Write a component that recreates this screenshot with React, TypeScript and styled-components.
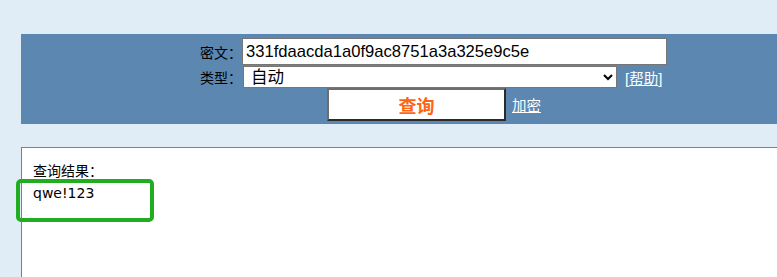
import * as React from "react";
import styled, { createGlobalStyle } from "styled-components";

const GlobalStyle = createGlobalStyle`
    html, body {
        margin: 0;
        padding: 0;
        overflow: hidden;
        background: #e1edf6;
        font-family: "Liberation Sans", "Noto Sans CJK SC", sans-serif;
        font-size: 14px;
        color: #000;
    }
`;

const App: React.FC = () => {
    const [cipher, setCipher] = React.useState("331fdaacda1a0f9ac8751a3a325e9c5e");
    const [kind, setKind] = React.useState("auto");

    return (
        <>
            <GlobalStyle />
            <Page>
                <QueryPanel>
                    <FormRow>
                        <Label>密文：</Label>
                        <TextInput
                            type="text"
                            value={cipher}
                            onChange={(e) => setCipher(e.target.value)}
                        />
                    </FormRow>
                    <FormRow $top={1}>
                        <Label>类型：</Label>
                        <TypeSelect value={kind} onChange={(e) => setKind(e.target.value)}>
                            <option value="auto">自动</option>
                            <option value="md5">md5</option>
                        </TypeSelect>
                        <HelpText>
                            [<WhiteLink href="#">帮助</WhiteLink>]
                        </HelpText>
                    </FormRow>
                    <ButtonRow>
                        <QueryButton type="button">查询</QueryButton>
                        <WhiteLink href="#">加密</WhiteLink>
                    </ButtonRow>
                </QueryPanel>

                <ResultPanel>
                    <ResultLine>查询结果：</ResultLine>
                    <ResultLine>qwe!123</ResultLine>
                    <Highlight />
                </ResultPanel>
            </Page>
        </>
    );
};

const Page = styled.div`
    display: flex;
    flex-direction: column;
    gap: 23px;
    padding: 34px 0 0 21px;
    height: 100vh;
    box-sizing: border-box;
`;

const QueryPanel = styled.div`
    width: 825px;
    flex-shrink: 0;
    background: #5b87b1;
    display: flex;
    flex-direction: column;
    align-items: center;
    padding: 4px 0 3px 0;
    box-sizing: border-box;
`;

const FormRow = styled.div<{ $top?: number }>`
    width: 467px;
    display: flex;
    align-items: center;
    white-space: nowrap;
    margin-top: ${(p) => p.$top ?? 0}px;
`;

const Label = styled.span`
    width: 42px;
    flex-shrink: 0;
    font-size: 14px;
    line-height: 16px;
    font-family: "Noto Sans CJK SC", sans-serif;
    color: #000;
`;

const TextInput = styled.input`
    width: 425px;
    height: 27px;
    box-sizing: border-box;
    margin: 0;
    border: 1px solid #767676;
    padding: 0 3px;
    font-family: "Liberation Sans", sans-serif;
    font-size: 16.6px;
    color: #000;
    background: #fff;
    outline: 0;
`;

const TypeSelect = styled.select`
    width: 374px;
    flex-shrink: 0;
    height: 22px;
    box-sizing: border-box;
    margin: 0 0 0 1px;
    border: 1px solid #767676;
    border-radius: 0;
    padding: 0 3px;
    font-family: "Liberation Sans", "Noto Sans CJK SC", sans-serif;
    font-size: 16.5px;
    color: #000;
    background: #fff;
`;

const HelpText = styled.span`
    margin-left: 8px;
    font-size: 15px;
    color: #fff;
    font-family: "Liberation Sans", "Noto Sans CJK SC", sans-serif;
`;

const WhiteLink = styled.a`
    color: #fff;
    font-size: 14.5px;
    text-decoration: underline;
    font-family: "Noto Sans CJK SC", sans-serif;
`;

const ButtonRow = styled.div`
    display: flex;
    align-items: center;
    gap: 6px;
    margin-left: 1px;
`;

const QueryButton = styled.button`
    width: 179px;
    height: 33px;
    box-sizing: border-box;
    margin: 0;
    padding: 0;
    background: #fff;
    border-style: solid;
    border-width: 2px;
    border-color: #6e6e6e #2b2b2b #2b2b2b #6e6e6e;
    color: #ff6412;
    font-weight: bold;
    font-size: 18px;
    font-family: "Noto Sans CJK SC", sans-serif;
    cursor: pointer;
`;

const ResultPanel = styled.div`
    position: relative;
    width: 825px;
    flex: 1;
    background: #fff;
    border: 1px solid #5b87b1;
    border-bottom: 0;
    padding: 12px 11px 0 11px;
    box-sizing: border-box;
`;

const ResultLine = styled.div`
    font-family: "DejaVu Sans", "Noto Sans CJK SC", sans-serif;
    font-size: 14px;
    line-height: 22px;
    color: #000;
`;

const Highlight = styled.div`
    position: absolute;
    left: -6px;
    top: 31px;
    width: 138px;
    height: 43px;
    box-sizing: border-box;
    border: 4px solid #21ac21;
    border-radius: 5px;
`;

export default App;
